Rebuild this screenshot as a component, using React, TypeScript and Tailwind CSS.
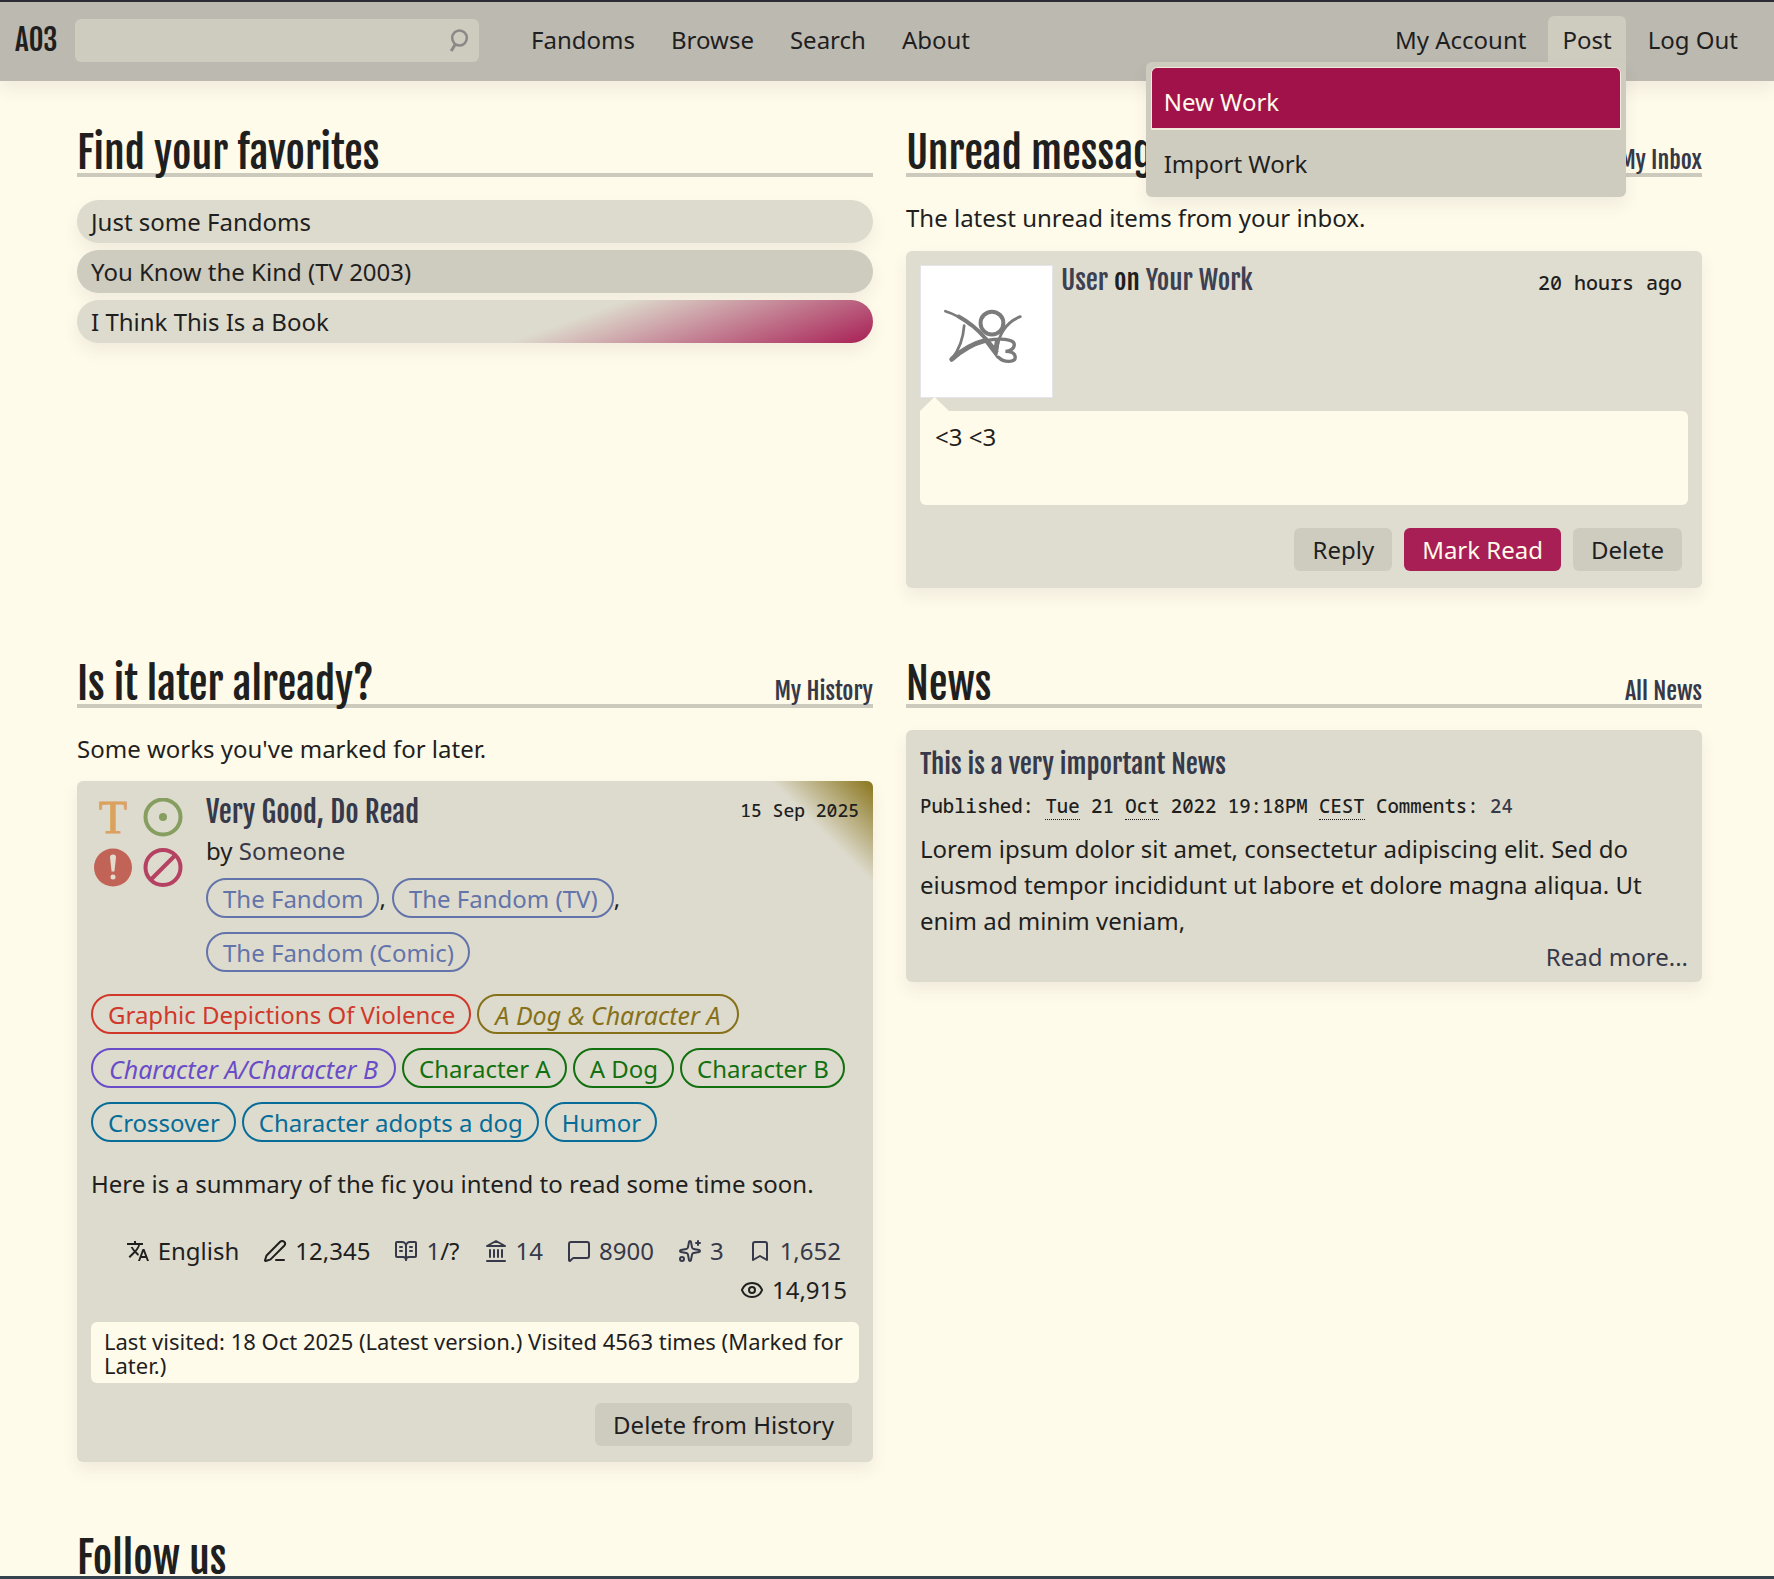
import type { ReactNode } from "react";
import {
  BookOpenText,
  Bookmark,
  Eye,
  MessageSquare,
  PenLine,
  Sparkles,
} from "lucide-react";

const display = "font-['Fjalla_One','Roboto_Condensed',sans-serif] font-normal";
const mono = "font-['Noto_Sans_Mono','DejaVu_Sans_Mono',monospace] font-medium";
const cardShadow = "shadow-[0_8px_16px_rgba(60,50,60,0.08)]";

function NavLink({ children }: { children: ReactNode }) {
  return (
    <li>
      <a href="#" className="block h-[46px] rounded-md px-3.5 leading-[48px]">
        {children}
      </a>
    </li>
  );
}

function Section({ title, more, children }: { title: string; more?: string; children?: ReactNode }) {
  return (
    <section className="min-w-0">
      <header className={`${display} flex h-[54px] items-baseline justify-between border-b-4 border-[#cccabd]`}>
        <h2 className="text-[42px] leading-[60px]">{title}</h2>
        {more && (
          <a href="#" className="text-2xl text-[#363949]">
            {more}
          </a>
        )}
      </header>
      {children}
    </section>
  );
}

function Tag({ className, italic, children }: { className: string; italic?: boolean; children: ReactNode }) {
  return (
    <a
      href="#"
      className={`block h-10 rounded-[20px] border-2 leading-[38px] ${italic ? "px-4 text-[25px] italic" : "pr-3.5 pl-[15px]"} ${className}`}
    >
      {children}
    </a>
  );
}

function Button({ primary, children }: { primary?: boolean; children: ReactNode }) {
  return (
    <button
      type="button"
      className={`h-[43px] rounded-md px-[18px] leading-[43px] ${primary ? "bg-[#a81f55] text-[#fffbea]" : "bg-[#cecbbf]"}`}
    >
      {children}
    </button>
  );
}

function TranslateIcon() {
  return (
    <svg viewBox="0 0 24 24" className="size-6" fill="currentColor" aria-hidden="true">
      <path d="M12.9 15.1 10.3 12.6c1.8-2 3-4.2 3.7-6.6H17V4h-7V2H8v2H1v2h11.2c-.7 1.9-1.7 3.7-3.2 5.3-.9-1-1.7-2.1-2.3-3.3h-2c.7 1.6 1.7 3.2 3 4.6L2.6 17.6 4 19l5-5 3.100 3.100.8-2zM18.500 10h-2L12 22h2l1.100-3h4.800l1.100 3h2l-4.500-12zm-2.600 7 1.600-4.300 1.600 4.300h-3.200z" />
    </svg>
  );
}

function LandmarkIcon() {
  return (
    <svg
      viewBox="0 0 24 24"
      className="size-6"
      fill="none"
      stroke="currentColor"
      strokeWidth="2"
      strokeLinecap="round"
      strokeLinejoin="round"
      aria-hidden="true"
    >
      <path d="M3 7 12 2l9 5zM6 11v7M10 11v7M14 11v7M18 11v7M3 22h18" />
    </svg>
  );
}

function RatingBlock() {
  return (
    <svg viewBox="0 0 90 90" className="size-[90px]" role="img" aria-label="Teen, general, warnings apply, incomplete">
      <text
        x="19"
        y="35"
        textAnchor="middle"
        fontSize="46"
        fill="#dba15f"
        stroke="#dba15f"
        strokeWidth="1"
        fontFamily="'Liberation Serif', serif"
      >
        T
      </text>
      <circle cx="69" cy="19" r="17.500" fill="none" stroke="#869f60" strokeWidth="4" />
      <circle cx="69" cy="19" r="4" fill="#869f60" />
      <circle cx="19" cy="69.500" r="19" fill="#c16457" />
      <path d="M16 59.500a3 3 0 0 1 6 0l-1.600 14h-2.800z" fill="#e3dccd" />
      <circle cx="19" cy="79" r="2.500" fill="#e3dccd" />
      <circle cx="69" cy="69.500" r="17.500" fill="none" stroke="#b54262" strokeWidth="4" />
      <path d="M57 81.500 81 57.500" stroke="#b54262" strokeWidth="4" />
    </svg>
  );
}

function AvatarLogo() {
  return (
    <svg viewBox="0 0 132 132" className="size-full" fill="none" stroke="#7b7b7b" strokeLinecap="round" aria-hidden="true">
      <circle cx="71.500" cy="57.500" r="11.500" strokeWidth="4" />
      <path d="M24.500 45.500c10 3 18 8 25 14" strokeWidth="2.600" />
      <path d="M38 51c11 6 20 14 27 22l11 13" strokeWidth="4" />
      <path d="M43.500 60c-1 13-5 24-12 33" strokeWidth="2.800" />
      <path d="M31 94c12-11 28-19 43-20 12-1 20 1 20 5 0 4-4 7-9 7 6 0 10 2 10 6 0 5-11 6-17 0" strokeWidth="3.400" />
      <path d="M31 94c11-10 22-16 34-19" strokeWidth="5" />
      <path d="M66 75l9 12 2-12" strokeWidth="5" />
      <path d="M76 86c2-17 9-29 24-35" strokeWidth="2.800" />
    </svg>
  );
}

function Stat({ icon, muted, last, children }: { icon: ReactNode; muted?: boolean; last?: boolean; children: ReactNode }) {
  return (
    <li className={`flex items-center gap-2 ${muted ? "text-[#363949]" : ""} ${last ? "mr-1.5" : ""}`}>
      {icon}
      <span>{children}</span>
    </li>
  );
}

function Abbr({ title, children }: { title: string; children: ReactNode }) {
  return (
    <abbr title={title} className="border-b border-dotted border-[#1f1f1f] no-underline">
      {children}
    </abbr>
  );
}

export default function App() {
  return (
    <div className="h-screen overflow-hidden border-b-[3px] border-[#35434f] bg-[#fffbea] font-['Noto_Sans',sans-serif] text-2xl text-[#1f1f1f]">
      <header className="flex h-[81px] items-start border-t-2 border-[#2d2b36] bg-[#bcb9b1] pr-[22px] pl-[15px] shadow-[0_8px_16px_rgba(60,50,60,0.08)]">
        <a href="#" className={`${display} mt-[17px] w-[60px] text-[29px] leading-[43px]`}>
          AO3
        </a>
        <form className="mt-[17px] flex h-[43px] w-[404px] items-center rounded-md bg-[#cecbbf] pr-2.5" role="search">
          <input type="text" aria-label="Search works" className="h-full min-w-0 flex-1 bg-transparent px-3 outline-none" />
          <button type="submit" aria-label="Search">
            <svg viewBox="0 0 20 24" className="h-6 w-5" fill="none" stroke="#8a8988" strokeWidth="2.500" aria-hidden="true">
              <ellipse cx="10.500" cy="9" rx="7.300" ry="7.500" />
              <path d="M6.500 15 2.200 22" strokeWidth="3" />
            </svg>
          </button>
        </form>
        <nav aria-label="Site" className="mt-3.5 flex flex-1 justify-between pl-[38px]">
          <ul className="flex gap-2">
            <NavLink>Fandoms</NavLink>
            <NavLink>Browse</NavLink>
            <NavLink>Search</NavLink>
            <NavLink>About</NavLink>
          </ul>
          <ul className="flex gap-2">
            <NavLink>My Account</NavLink>
            <li className="relative">
              <a href="#" className="block h-[46px] rounded-t-md bg-[#cecbbf] px-3.5 leading-[48px]">
                Post
              </a>
              <ul className="absolute top-full right-0 z-10 w-[480px] rounded-md rounded-tr-none bg-[#cecbbf] p-[5px] shadow-[0_8px_16px_rgba(60,50,60,0.08)]">
                <li>
                  <a href="#" className="block h-[63px] rounded-t-md border border-b-2 border-[#efeadb] bg-[#a2124a] px-3 leading-[68px] text-[#fffbea]">
                    New Work
                  </a>
                </li>
                <li>
                  <a href="#" className="block h-[62px] px-[13px] leading-[68px]">
                    Import Work
                  </a>
                </li>
              </ul>
            </li>
            <NavLink>Log Out</NavLink>
          </ul>
        </nav>
      </header>

      <main className="grid grid-cols-2 gap-x-[33px] pt-[42px] pr-[72px] pl-[77px]">
        <Section title="Find your favorites">
          <ul className="mt-[23px] flex flex-col gap-[7px]">
            <li>
              <a href="#" className={`block h-[43px] rounded-full bg-[#dddbcd] px-3.5 leading-[44px] ${cardShadow}`}>
                Just some Fandoms
              </a>
            </li>
            <li>
              <a href="#" className={`block h-[43px] rounded-full bg-[#cecbbf] px-3.5 leading-[44px] ${cardShadow}`}>
                You Know the Kind (TV 2003)
              </a>
            </li>
            <li>
              <a
                href="#"
                className={`block h-[43px] rounded-full bg-[#dddbcd] bg-[linear-gradient(160deg,transparent_60%,#a81f55)] px-3.5 leading-[44px] ${cardShadow}`}
              >
                I Think This Is a Book
              </a>
            </li>
          </ul>
        </Section>

        <Section title="Unread messages" more="My Inbox">
          <p className="mt-[23px] leading-9">The latest unread items from your inbox.</p>
          <article className={`mt-[15px] flex h-[337px] flex-col rounded-md bg-[#dfddd0] px-3.5 pt-3.5 ${cardShadow}`}>
            <div className="flex">
              <div className="size-[133px] border border-[#e4e4ea] bg-white">
                <AvatarLogo />
              </div>
              <div className="flex flex-1 items-baseline justify-between self-start pr-1.5 pl-2">
                <h3 className={`${display} text-[27px] leading-[30px]`}>
                  <a href="#" className="text-[#3c4050]">User</a> on <a href="#" className="text-[#3c4050]">Your Work</a>
                </h3>
                <time className={`${mono} text-xl`}>20 hours ago</time>
              </div>
            </div>
            <div className="relative mt-[13px] h-[94px] rounded-md rounded-tl-none bg-[#fffbea] px-[15px] pt-2 leading-9">
              <span className="absolute bottom-full left-0 h-3.5 w-[29px] bg-[#fffbea] [clip-path:polygon(50%_0,100%_100%,0_100%)]" />
              <p>&lt;3 &lt;3</p>
            </div>
            <div className="mt-[23px] flex justify-end gap-3 pr-1.5">
              <Button>Reply</Button>
              <Button primary>Mark Read</Button>
              <Button>Delete</Button>
            </div>
          </article>
        </Section>

        <div className="mt-[66px]">
          <Section title="Is it later already?" more="My History">
            <p className="mt-[23px] leading-9">Some works you've marked for later.</p>
            <article
              className={`mt-3.5 rounded-md bg-[#dddbcd] bg-[linear-gradient(225deg,#8a751c,transparent_72px)] px-3.5 pb-4 ${cardShadow}`}
            >
              <div className="flex pt-[17px] pl-[3px]">
                <RatingBlock />
                <div className="flex-1 pl-[22px]">
                  <div className="-mt-2 flex items-start justify-between">
                    <h3 className={`${display} text-[29px] leading-[44px]`}>
                      <a href="#" className="text-[#363949]">Very Good, Do Read</a>
                    </h3>
                    <time className={`${mono} text-lg leading-10`}>15 Sep 2025</time>
                  </div>
                  <p className="leading-[34px]">
                    by <a href="#" className="text-[#363949]">Someone</a>
                  </p>
                  <ul className="mt-2.5 flex flex-wrap gap-x-1.5 gap-y-3.5 leading-10">
                    <li className="flex">
                      <Tag className="border-[#6374ab] text-[#6374ab]">The Fandom</Tag>,
                    </li>
                    <li className="flex">
                      <Tag className="border-[#6374ab] text-[#6374ab]">The Fandom (TV)</Tag>,
                    </li>
                    <li className="flex">
                      <Tag className="border-[#6374ab] text-[#6374ab]">The Fandom (Comic)</Tag>
                    </li>
                  </ul>
                </div>
              </div>

              <ul className="mt-[22px] flex flex-wrap gap-x-1.5 gap-y-3.5">
                <li><Tag className="border-[#d0382b] text-[#d0382b]">Graphic Depictions Of Violence</Tag></li>
                <li><Tag italic className="border-[#86701a] text-[#86701a]">A Dog &amp; Character A</Tag></li>
                <li><Tag italic className="border-[#694cc8] text-[#694cc8]">Character A/Character B</Tag></li>
                <li><Tag className="border-[#127010] text-[#127010]">Character A</Tag></li>
                <li><Tag className="border-[#127010] text-[#127010]">A Dog</Tag></li>
                <li><Tag className="border-[#127010] text-[#127010]">Character B</Tag></li>
                <li><Tag className="border-[#076d98] text-[#076d98]">Crossover</Tag></li>
                <li><Tag className="border-[#076d98] text-[#076d98]">Character adopts a dog</Tag></li>
                <li><Tag className="border-[#076d98] text-[#076d98]">Humor</Tag></li>
              </ul>

              <p className="mt-6 leading-9">Here is a summary of the fic you intend to read some time soon.</p>

              <ul className="mt-[31px] flex flex-wrap justify-end gap-x-6 gap-y-[3px] pr-3 leading-9">
                <Stat icon={<TranslateIcon />}>English</Stat>
                <Stat icon={<PenLine className="size-6" />}>12,345</Stat>
                <Stat icon={<BookOpenText className="size-6 text-[#363949]" />}>
                  <a href="#" className="text-[#363949]">1</a>/?
                </Stat>
                <Stat muted icon={<LandmarkIcon />}>14</Stat>
                <Stat muted icon={<MessageSquare className="size-6" />}>8900</Stat>
                <Stat muted icon={<Sparkles className="size-6" />}>3</Stat>
                <Stat muted last icon={<Bookmark className="size-6" />}>1,652</Stat>
                <Stat icon={<Eye className="size-6" />}>14,915</Stat>
              </ul>

              <p className="mt-3.5 rounded-md bg-[#fffbea] px-[13px] pt-[7px] pb-[6px] text-[22px] leading-6">
                Last visited: 18 Oct 2025 (Latest version.) Visited 4563 times (Marked for Later.)
              </p>
              <div className="mt-5 flex justify-end pr-[7px]">
                <Button>Delete from History</Button>
              </div>
            </article>
          </Section>
        </div>

        <div className="mt-[66px]">
          <Section title="News" more="All News">
            <article className={`mt-[22px] rounded-md bg-[#dddbcd] px-3.5 pt-3.5 pb-[7px] ${cardShadow}`}>
              <h3 className={`${display} text-[27px] leading-10`}>
                <a href="#" className="text-[#363949]">This is a very important News</a>
              </h3>
              <p className={`${mono} mt-1 mb-[7px] text-[19px] leading-9`}>
                Published: <Abbr title="Tuesday">Tue</Abbr> 21 <Abbr title="October">Oct</Abbr> 2022 19:18PM{" "}
                <Abbr title="Central European Summer Time">CEST</Abbr> Comments:{" "}
                <a href="#" className="text-[#363949]">24</a>
              </p>
              <p className="leading-9">
                Lorem ipsum dolor sit amet, consectetur adipiscing elit. Sed do eiusmod tempor incididunt ut labore et dolore
                magna aliqua. Ut enim ad minim veniam,
              </p>
              <p className="text-right leading-9">
                <a href="#" className="text-[#363949]">Read more...</a>
              </p>
            </article>
          </Section>
        </div>

        <div className="mt-[66px]">
          <Section title="Follow us" />
        </div>
      </main>
    </div>
  );
}
